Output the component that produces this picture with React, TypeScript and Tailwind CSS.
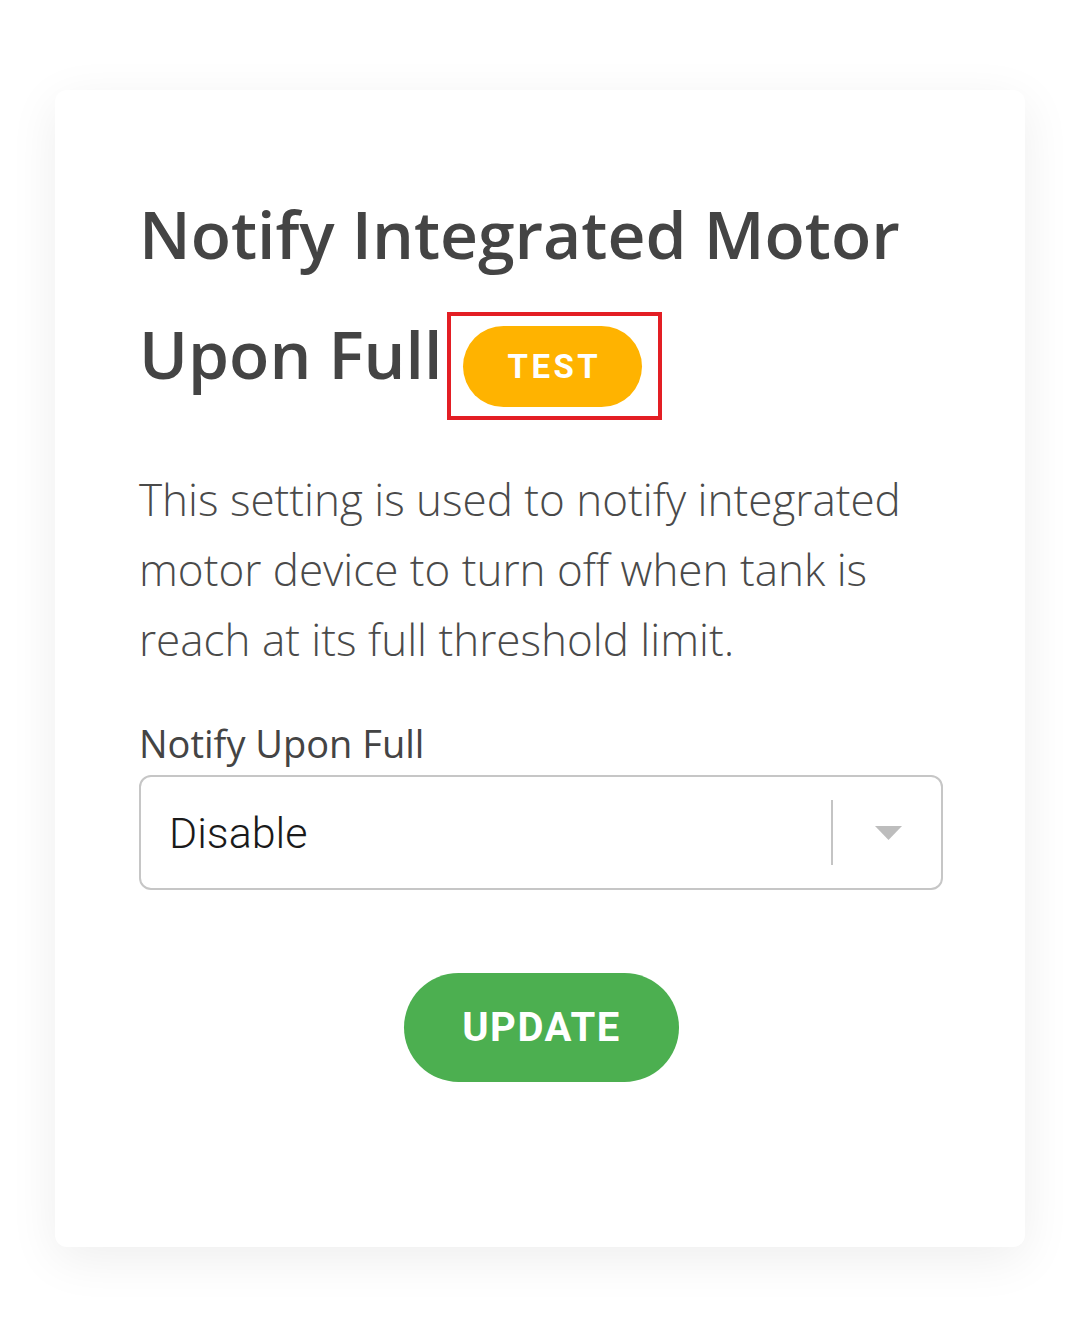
import { useState } from 'react';

const options = ['Disable', 'Enable'];

function DropdownArrow() {
  return (
    <svg width="27" height="14" viewBox="0 0 27 14" aria-hidden="true">
      <path d="M0 0 H27 L13.5 14 Z" fill="#bdbdbd" />
    </svg>
  );
}

function NotifySelect({ value }: { value: string }) {
  return (
    <div className="flex h-[115px] w-full items-center rounded-[12px] border-2 border-[#c6c6c6] bg-white">
      <span className="flex-1 pl-[28px] font-['Roboto',sans-serif] text-[43px] font-light text-[#1a1a1a]">{value}</span>
      <span className="h-[65px] w-[2px] bg-[#c4c4c4]" />
      <span className="flex w-[108px] items-center justify-center pl-[2px]">
        <DropdownArrow />
      </span>
    </div>
  );
}

export default function App() {
  const [value] = useState(options[0]);

  return (
    <div className="min-h-[1330px] bg-white pt-[90px] pl-[55px] font-['Open_Sans',sans-serif]">
      <div className="w-[970px] rounded-[12px] bg-white pt-[83px] pr-[82px] pb-[165px] pl-[84px] shadow-[0_12px_50px_rgba(0,0,0,0.07)]">
        <h3 className="text-[66px] leading-[120px] font-semibold text-[#444]">
          Notify Integrated Motor Upon Full
          <span className="relative top-[5px] ml-[5px] inline-flex border-4 border-[#e31e24] pt-[10px] pr-[16px] pb-[9px] pl-[12px] align-middle">
            <span className="flex h-[81px] w-[179px] items-center justify-center rounded-full bg-[#ffb300] pl-[3px] font-['Roboto',sans-serif] text-[33px] leading-none font-bold tracking-[3.5px] text-white">
              TEST
            </span>
          </span>
        </h3>
        <p className="mt-[49px] text-[44px] leading-[70px] font-light text-[#4a4a4a]">
          This setting is used to notify integrated motor device to turn off when tank is reach at its full threshold limit.
        </p>
        <label className="mt-[43px] block text-[38px] leading-[52px] text-[#444]">Notify Upon Full</label>
        <div className="mt-[6px]">
          <NotifySelect value={value} />
        </div>
        <div className="mt-[83px] flex justify-center">
          <button className="flex h-[109px] w-[275px] items-center justify-center rounded-full bg-[#4caf50] pl-[1px] font-['Roboto',sans-serif] text-[40px] leading-none font-bold tracking-[1.5px] text-white">
            UPDATE
          </button>
        </div>
      </div>
    </div>
  );
}
